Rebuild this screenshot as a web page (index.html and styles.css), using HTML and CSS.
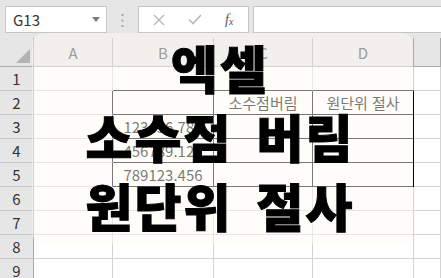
FILE: index.html
```html
<!DOCTYPE html>
<html lang="ko">
<head>
    <meta charset="UTF-8">
    <title>엑셀 소수점 버림 원단위 절사</title>
    <link rel="stylesheet" href="styles.css">
</head>
<body>
    <div class="sheet">
        <div class="toolbar">
            <div class="name-box">
                <span>G13</span>
                <svg width="8" height="5" viewBox="0 0 8 5"><polygon points="0,0 8,0 4,5" fill="#7a7a7a"/></svg>
            </div>
            <svg class="grip" width="3" height="13" viewBox="0 0 3 13">
                <rect x="0.5" y="0" width="2" height="2" fill="#a8a8a8"/>
                <rect x="0.5" y="5.5" width="2" height="2" fill="#a8a8a8"/>
                <rect x="0.5" y="11" width="2" height="2" fill="#a8a8a8"/>
            </svg>
            <div class="fx-box">
                <svg width="12" height="12" viewBox="0 0 12 12"><path d="M1 1 L11 11 M11 1 L1 11" stroke="#b8b8b8" stroke-width="1.4" fill="none"/></svg>
                <svg width="14" height="11" viewBox="0 0 14 11"><path d="M1 5.5 L5 9.5 L13 1" stroke="#b8b8b8" stroke-width="1.6" fill="none"/></svg>
                <span class="fx">f<sub>x</sub></span>
            </div>
            <div class="formula-input"></div>
        </div>

        <div class="grid">
            <div class="corner"><svg width="14" height="14" viewBox="0 0 14 14"><polygon points="0,14 14,14 14,0" fill="#b4b4b4"/></svg></div>
            <div class="col-head">A</div>
            <div class="col-head">B</div>
            <div class="col-head">C</div>
            <div class="col-head">D</div>
            <div class="col-head"></div>

            <div class="row-head">1</div>
            <div class="cell"></div>
            <div class="cell top-edge"></div>
            <div class="cell top-edge"></div>
            <div class="cell top-edge"></div>
            <div class="cell"></div>

            <div class="row-head">2</div>
            <div class="cell left-edge"></div>
            <div class="cell boxed"></div>
            <div class="cell boxed">소수점버림</div>
            <div class="cell boxed">원단위 절사</div>
            <div class="cell"></div>

            <div class="row-head">3</div>
            <div class="cell left-edge"></div>
            <div class="cell boxed">123456.789</div>
            <div class="cell boxed"></div>
            <div class="cell boxed"></div>
            <div class="cell"></div>

            <div class="row-head">4</div>
            <div class="cell left-edge"></div>
            <div class="cell boxed">456789.123</div>
            <div class="cell boxed"></div>
            <div class="cell boxed"></div>
            <div class="cell"></div>

            <div class="row-head">5</div>
            <div class="cell left-edge"></div>
            <div class="cell boxed">789123.456</div>
            <div class="cell boxed"></div>
            <div class="cell boxed"></div>
            <div class="cell"></div>

            <div class="row-head">6</div>
            <div class="cell"></div><div class="cell"></div><div class="cell"></div><div class="cell"></div><div class="cell"></div>
            <div class="row-head">7</div>
            <div class="cell"></div><div class="cell"></div><div class="cell"></div><div class="cell"></div><div class="cell"></div>
            <div class="row-head">8</div>
            <div class="cell"></div><div class="cell"></div><div class="cell"></div><div class="cell"></div><div class="cell"></div>
            <div class="row-head">9</div>
            <div class="cell"></div><div class="cell"></div><div class="cell"></div><div class="cell"></div><div class="cell"></div>
        </div>

        <div class="overlay">
            <div class="title">엑셀</div>
            <div class="title">소수점 버림</div>
            <div class="title">원단위 절사</div>
        </div>
    </div>
</body>
</html>
```

FILE: styles.css
```css
* {
    margin: 0;
    padding: 0;
    box-sizing: border-box;
}

html, body {
    width: 100%;
    height: 100%;
    overflow: hidden;
    background: #ffffff;
    font-family: "Noto Sans CJK KR", "Noto Sans", sans-serif;
}

.sheet {
    position: relative;
    width: 100%;
    height: 100%;
}

/* formula bar */
.toolbar {
    height: 38px;
    background: #e6e6e6;
    display: flex;
    align-items: flex-start;
    padding: 6px 0 0 5px;
}

.name-box {
    width: 102px;
    height: 27px;
    background: #ffffff;
    border: 1px solid #c6c6c6;
    display: flex;
    align-items: center;
    justify-content: space-between;
    padding: 0 6px 0 7px;
    font-size: 15px;
    color: #333333;
}

.grip {
    margin: 8px 0 0 14px;
}

.fx-box {
    width: 111px;
    height: 27px;
    margin-left: 14px;
    background: #ffffff;
    border: 1px solid #c6c6c6;
    display: flex;
    align-items: center;
    padding-left: 14px;
    gap: 23px;
}

.fx {
    font-family: "Liberation Serif", serif;
    font-style: italic;
    font-size: 14px;
    color: #555555;
}

.fx sub {
    font-size: 10px;
    vertical-align: -1px;
}

.formula-input {
    flex: 1;
    height: 27px;
    margin-left: 4px;
    background: #ffffff;
    border: 1px solid #c6c6c6;
    border-right: none;
}

/* sheet grid */
.grid {
    display: grid;
    grid-template-columns: 34px 79px 101px 99px 101px 1fr;
    grid-template-rows: 29px repeat(9, 24px);
}

.corner {
    background: #e6e6e6;
    border-right: 1px solid #ababab;
    border-bottom: 1px solid #ababab;
    display: flex;
    align-items: flex-end;
    justify-content: flex-end;
    padding: 0 3px 3px 0;
}

.col-head {
    background: #e6e6e6;
    border-right: 1px solid #ababab;
    border-bottom: 1px solid #ababab;
    display: flex;
    align-items: center;
    justify-content: center;
    font-size: 15px;
    color: #444444;
}

.row-head {
    background: #e6e6e6;
    border-right: 1px solid #ababab;
    border-bottom: 1px solid #c8c8c8;
    display: flex;
    align-items: center;
    justify-content: center;
    font-size: 15px;
    color: #333333;
}

.cell {
    border-right: 1px solid #d4d4d4;
    border-bottom: 1px solid #d4d4d4;
    display: flex;
    align-items: center;
    justify-content: center;
    font-size: 15px;
    color: #000000;
    white-space: nowrap;
}

.cell.top-edge {
    border-bottom-color: #000000;
}

.cell.left-edge {
    border-right-color: #000000;
}

.cell.boxed {
    border-right-color: #000000;
    border-bottom-color: #000000;
}

/* title card over the sheet */
.overlay {
    position: absolute;
    left: 32px;
    top: 33px;
    width: 381px;
    height: 211px;
    border-radius: 12px;
    background: rgba(253, 251, 242, 0.48);
    display: flex;
    flex-direction: column;
    align-items: center;
    padding-right: 5px;
}

.title {
    font-size: 51px;
    line-height: 69px;
    font-weight: 900;
    color: #000000;
    -webkit-text-stroke: 1px #000000;
    letter-spacing: 2px;
    word-spacing: 8px;
    white-space: nowrap;
}
```
